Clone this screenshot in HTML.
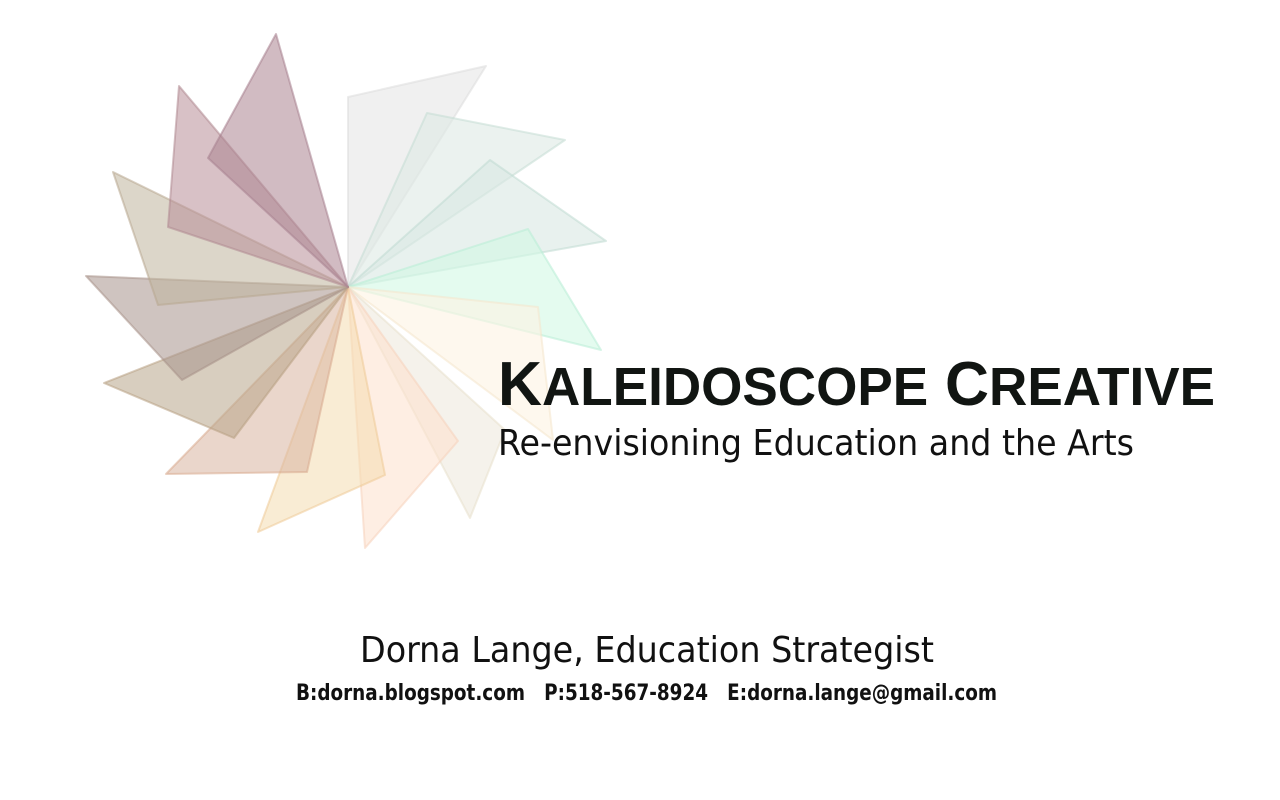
<!DOCTYPE html>
<html><head><meta charset="utf-8"><style>
html,body{margin:0;padding:0;background:#fff;width:1280px;height:800px;overflow:hidden}
</style></head><body>
<svg width="1280" height="800" viewBox="0 0 1280 800" xmlns="http://www.w3.org/2000/svg">
<g stroke-width="2" stroke-linejoin="round" stroke-opacity="0.55">
<polygon points="348,287 348,97 486,66" fill="#e6e6e6" fill-opacity="0.6" stroke="#dcdcdc"/>
<polygon points="348,287 427,113 565,140" fill="#dde9e4" fill-opacity="0.6" stroke="#c4dcd3"/>
<polygon points="348,287 490,160 606,241" fill="#d8e8e2" fill-opacity="0.6" stroke="#c0dad2"/>
<polygon points="348,287 528,229 601,350" fill="#d2f8e4" fill-opacity="0.6" stroke="#b8ecd6"/>
<polygon points="348,287 538,307 553,440" fill="#fdf3e2" fill-opacity="0.6" stroke="#f4e6cc"/>
<polygon points="348,287 505,430 470,518" fill="#ede8da" fill-opacity="0.55" stroke="#e8e0cc"/>
<polygon points="348,287 458,441 365,548" fill="#fde0cc" fill-opacity="0.55" stroke="#f6d2bc"/>
<polygon points="348,287 385,475 258,532" fill="#f4dcb0" fill-opacity="0.55" stroke="#eecb98"/>
<polygon points="348,287 307,472 166,474" fill="#d8b4a0" fill-opacity="0.55" stroke="#d8ac90"/>
<polygon points="348,287 234,438 104,383" fill="#b8a68a" fill-opacity="0.55" stroke="#b8a084"/>
<polygon points="348,287 182,380 86,276" fill="#a8948c" fill-opacity="0.55" stroke="#a89288"/>
<polygon points="348,287 158,305 113,172" fill="#c0b49c" fill-opacity="0.55" stroke="#b8a890"/>
<polygon points="348,287 168,227 179,86" fill="#b88e98" fill-opacity="0.55" stroke="#b08a92"/>
<polygon points="348,287 208,158 276,34" fill="#ac8490" fill-opacity="0.55" stroke="#a88290"/>
</g>
<text x="498" y="405" font-family="Liberation Sans Narrow, Liberation Sans, sans-serif" font-weight="bold" font-size="62" fill="#111512" textLength="717" lengthAdjust="spacingAndGlyphs">K<tspan font-size="54">ALEIDOSCOPE</tspan> C<tspan font-size="54">REATIVE</tspan></text>
<text x="498" y="455" font-family="DejaVu Sans Condensed, DejaVu Sans, sans-serif" font-size="36" fill="#111" textLength="636" lengthAdjust="spacingAndGlyphs">Re-envisioning Education and the Arts</text>
<text x="360" y="662" font-family="DejaVu Sans Condensed, DejaVu Sans, sans-serif" font-size="36" fill="#111" textLength="574" lengthAdjust="spacingAndGlyphs">Dorna Lange, Education Strategist</text>
<text x="296" y="700" font-family="DejaVu Sans Condensed, DejaVu Sans, sans-serif" font-weight="bold" font-size="22" fill="#111" textLength="701" lengthAdjust="spacingAndGlyphs" xml:space="preserve">B:dorna.blogspot.com   P:518-567-8924   E:dorna.lange@gmail.com</text>
</svg>
</body></html>
